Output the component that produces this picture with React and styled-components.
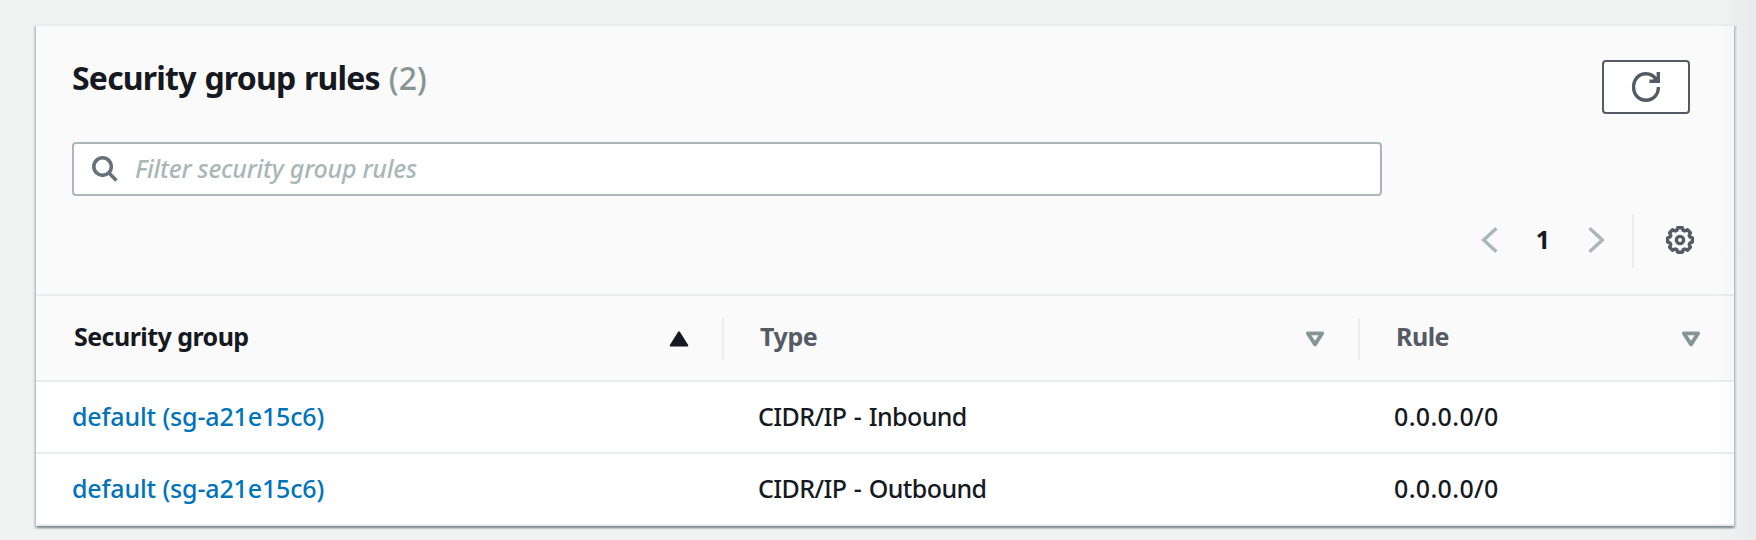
import React from 'react';
import styled, { createGlobalStyle } from 'styled-components';

const GlobalStyle = createGlobalStyle`
  *, *::before, *::after { box-sizing: border-box; }
  html, body { margin: 0; padding: 0; }
  body {
    background: #f1f3f3;
    color: #16191f;
    font-family: "Noto Sans", "Open Sans", sans-serif;
    font-size: 25px;
    font-weight: 500;
    overflow: hidden;
  }
`;

const Page = styled.main`
  position: relative;
  width: 1756px;
  height: 540px;
  padding: 24px 22px 0 36px;
`;

const EdgeShade = styled.div`
  position: absolute;
  top: 0;
  right: 0;
  bottom: 0;
  width: 48px;
  pointer-events: none;
  background: linear-gradient(to right, rgba(0, 20, 20, 0), rgba(0, 20, 20, 0.01) 45%, rgba(0, 20, 20, 0.035));
`;

const Panel = styled.section`
  background: #fff;
  border-top: 2px solid #eaeded;
  box-shadow:
    0 2px 2px 0 rgba(0, 28, 36, 0.3),
    2px 2px 2px 0 rgba(0, 28, 36, 0.15),
    -2px 2px 2px 0 rgba(0, 28, 36, 0.15);
`;

const PanelHeader = styled.header`
  height: 270px;
  padding: 34px 36px 0;
  background: #fafafa;
  border-bottom: 2px solid #eaeded;
`;

const TitleRow = styled.div`
  display: flex;
  justify-content: space-between;
  align-items: flex-start;
  height: 82px;
  padding-right: 8px;
`;

const Title = styled.h2`
  display: flex;
  gap: 9px;
  margin: -5px 0 0;
  font-size: 32px;
  line-height: 46px;
  font-weight: 700;
  letter-spacing: -0.8px;
  word-spacing: 1.2px;
`;

const Count = styled.span`
  color: #879596;
  font-weight: 500;
  letter-spacing: -0.2px;
`;

const RefreshButton = styled.button`
  display: flex;
  align-items: center;
  justify-content: center;
  width: 88px;
  height: 54px;
  padding: 0;
  color: #545b64;
  background: #fff;
  border: 2px solid currentColor;
  border-radius: 4px;
`;

const FilterField = styled.label`
  display: flex;
  align-items: center;
  gap: 17px;
  width: 1310px;
  height: 54px;
  padding-left: 18px;
  background: #fff;
  border: 2px solid #aab7b8;
  border-radius: 4px;
`;

const FilterInput = styled.input`
  flex: 1;
  height: 50px;
  padding: 0 0 2px;
  border: 0;
  outline: 0;
  background: transparent;
  font: inherit;
  letter-spacing: -0.25px;
  &::placeholder {
    color: #aab7b8;
    font-style: italic;
    opacity: 1;
  }
`;

const Controls = styled.div`
  display: flex;
  justify-content: flex-end;
  align-items: center;
  height: 54px;
  margin-top: 18px;
  padding-right: 4px;
`;

const PageButton = styled.button`
  display: flex;
  padding: 0 0 2px;
  border: 0;
  background: none;
  color: #aab7b8;
`;

const PageNumber = styled.span`
  width: 90px;
  padding-bottom: 4px;
  text-align: center;
  font-weight: 700;
  line-height: 34px;
`;

const SettingsButton = styled(PageButton)`
  color: #545b64;
`;

const Divider = styled.span`
  width: 2px;
  height: 54px;
  margin: 0 32px 0 27px;
  background: #eaeded;
`;

const Grid = styled.div`
  display: grid;
  grid-template-columns: 688px 636px 374px;
  align-items: center;
  height: ${(p) => (p.$head ? 86 : 72)}px;
  padding-${(p) => (p.$head ? 'top' : 'bottom')}: 2px;
  background: ${(p) => (p.$head ? '#fafafa' : '#fff')};
  border-bottom: 2px solid #eaeded;
`;

const HeadCell = styled.div`
  display: flex;
  align-items: center;
  justify-content: space-between;
  height: 42px;
  padding: 0 33px 0 ${(p) => p.$inset}px;
  border-right: ${(p) => (p.$last ? '0' : '2px solid #eaeded')};
  color: ${(p) => (p.$active ? '#16191f' : '#545b64')};
  font-weight: 700;
  line-height: 34px;
`;

const HeadLabel = styled.span`
  padding-bottom: 6px;
  letter-spacing: ${(p) => p.$track}px;
`;

const Cell = styled.div`
  padding-left: ${(p) => p.$inset}px;
  line-height: 34px;
  white-space: nowrap;
  letter-spacing: ${(p) => p.$track || 0}px;
  word-spacing: ${(p) => p.$wordGap || 0}px;
`;

const Link = styled.a`
  color: #0073bb;
  text-decoration: none;
`;

const Icon = styled.svg`
  display: block;
  flex: none;
  overflow: visible;
  fill: none;
  stroke: currentColor;
`;

const SearchGlyph = styled(Icon)`
  margin-bottom: 1px;
  color: #687078;
`;

const SearchIcon = () => (
  <SearchGlyph width="26" height="26" viewBox="0 0 26 26" strokeWidth="3.6">
    <circle cx="10.6" cy="10.6" r="8.8" />
    <path d="M16.8 16.8 24.4 24.4" />
  </SearchGlyph>
);

const RefreshIcon = () => (
  <Icon width="28" height="30" viewBox="0 0 28 30" strokeWidth="3.4">
    <path d="M26.4 15C26.4 22.8 21.2 28.2 14 28.2S1.6 22.8 1.6 15 6.8 1.8 14 1.8c4.6 0 8.2 2.2 10.6 6.4" />
    <path d="M26.3 0v9.3H17.4" />
    <path d="M20.6 8.6 25.4 5v3.6z" fill="currentColor" strokeWidth="1" />
  </Icon>
);

const Chevron = ({ right }) => (
  <Icon width="17" height="26" viewBox="0 0 17 26" strokeWidth="3.5">
    <path d={right ? 'M1.6 1.2 14.3 13 1.6 24.8' : 'M15.4 1.2 2.7 13l12.7 11.8'} />
  </Icon>
);

const GearIcon = () => (
  <Icon width="28" height="28" viewBox="0 0 28 28" strokeWidth="3.4" strokeLinejoin="round">
    <path d="M11.7 1.7h4.6l.9 2.7 1.6.6 2.6-1.2 3 3-1.2 2.6.6 1.6 2.5.9v4.2l-2.5.9-.6 1.6 1.2 2.6-3 3-2.6-1.2-1.6.6-.9 2.7h-4.6l-.9-2.7-1.6-.6-2.6 1.2-3-3 1.2-2.6-.6-1.6-2.5-.9v-4.2l2.5-.9.6-1.6-1.2-2.6 3-3 2.6 1.2 1.6-.6z" />
    <circle cx="14" cy="14" r="3.6" />
  </Icon>
);

const SortIcon = ({ ascending }) => (
  <Icon width="20" height="16" viewBox="0 0 20 16" strokeWidth={ascending ? 2 : 3.8} strokeLinejoin="round">
    {ascending ? (
      <path d="M10 1.4 18.3 14.6H1.7z" fill="currentColor" />
    ) : (
      <path d="M2.8 2.3h14.4L10 13.4z" stroke="#879596" />
    )}
  </Icon>
);

const columns = [
  { label: 'Security group', inset: 38, ascending: true, track: -0.55 },
  { label: 'Type', inset: 36, track: -0.4 },
  { label: 'Rule', inset: 36, track: -0.5 },
];

const rules = [
  { group: 'default (sg-a21e15c6)', type: 'CIDR/IP - Inbound', rule: '0.0.0.0/0' },
  { group: 'default (sg-a21e15c6)', type: 'CIDR/IP - Outbound', rule: '0.0.0.0/0' },
];

export default function App() {
  return (
    <Page>
      <GlobalStyle />
      <Panel>
        <PanelHeader>
          <TitleRow>
            <Title>
              Security group rules <Count>(2)</Count>
            </Title>
            <RefreshButton aria-label="Refresh">
              <RefreshIcon />
            </RefreshButton>
          </TitleRow>
          <FilterField>
            <SearchIcon />
            <FilterInput placeholder="Filter security group rules" />
          </FilterField>
          <Controls>
            <PageButton aria-label="Previous page">
              <Chevron />
            </PageButton>
            <PageNumber>1</PageNumber>
            <PageButton aria-label="Next page">
              <Chevron right />
            </PageButton>
            <Divider />
            <SettingsButton aria-label="Preferences">
              <GearIcon />
            </SettingsButton>
          </Controls>
        </PanelHeader>
        <Grid $head>
          {columns.map((c, i) => (
            <HeadCell key={c.label} $inset={c.inset} $active={c.ascending} $last={i === columns.length - 1}>
              <HeadLabel $track={c.track}>{c.label}</HeadLabel>
              <SortIcon ascending={c.ascending} />
            </HeadCell>
          ))}
        </Grid>
        {rules.map((r) => (
          <Grid key={r.type}>
            <Cell $inset={36} $track={-0.15}>
              <Link>{r.group}</Link>
            </Cell>
            <Cell $inset={34} $track={-0.6} $wordGap={1.6}>{r.type}</Cell>
            <Cell $inset={34} $track={0.35}>{r.rule}</Cell>
          </Grid>
        ))}
      </Panel>
      <EdgeShade />
    </Page>
  );
}
